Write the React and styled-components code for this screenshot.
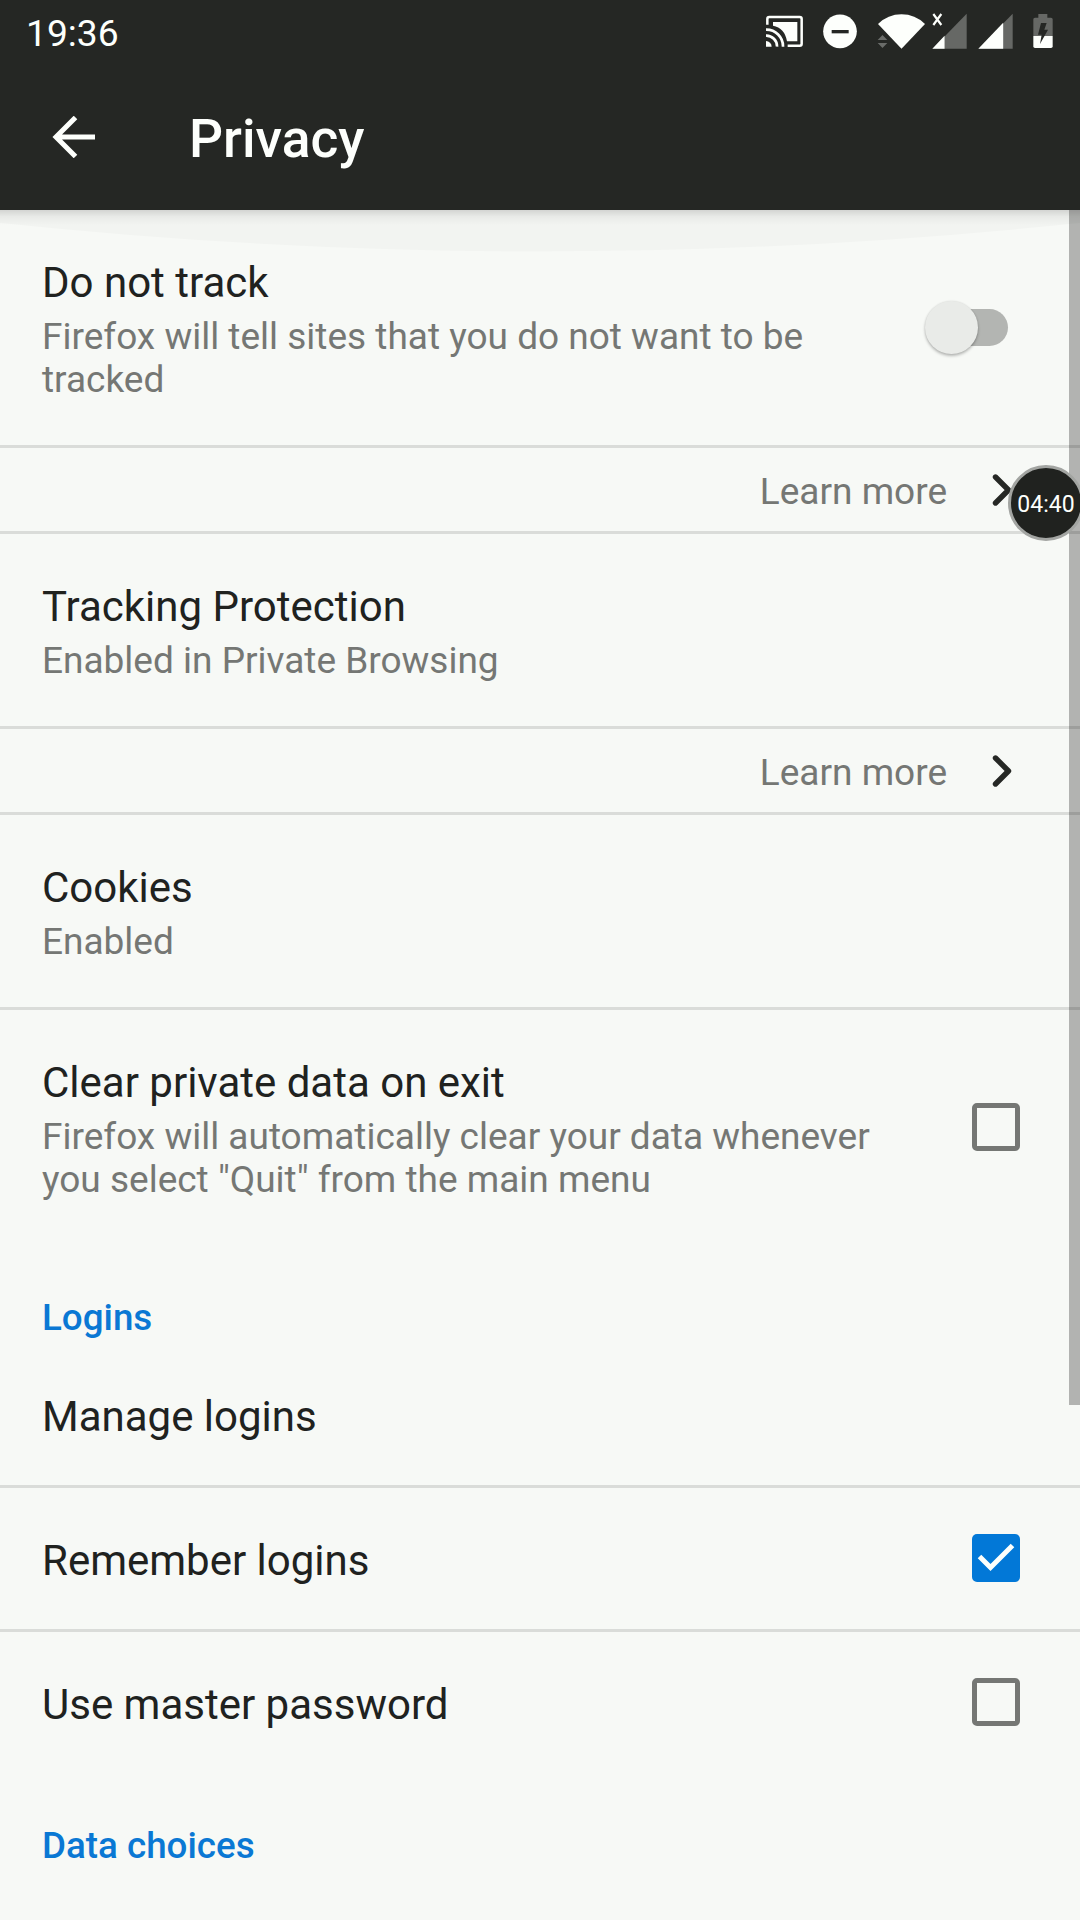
import React, { useState } from "react";
import styled, { createGlobalStyle } from "styled-components";

const INK = "#20221f";
const MUTED = "#757774";
const ACCENT = "#0a78d4";
const DARK = "#252724";
const PAPER = "#f7f9f6";

const GlobalStyle = createGlobalStyle`
  *, *::before, *::after { box-sizing: border-box; }
  body {
    margin: 0;
    background: ${PAPER};
    font-family: Roboto, "Noto Sans", sans-serif;
    overflow: hidden;
  }
`;

const Screen = styled.div`
  position: relative;
  display: flex;
  flex-direction: column;
  width: 1080px;
  height: 1920px;
  overflow: hidden;
  background: ${PAPER};
`;

const StatusBar = styled.header`
  display: flex;
  align-items: flex-start;
  justify-content: space-between;
  height: 63px;
  padding: 0 27px 0 26px;
  background: ${DARK};
  color: #fdfffc;
`;

const Clock = styled.span`
  padding-top: 11px;
  font-size: 37.2px;
  line-height: 44px;
`;

const StatusIcons = styled.div`
  display: flex;
  align-items: flex-start;
  padding-top: 13px;
`;

const StatusSvg = styled.svg`
  flex: none;
  display: block;
  height: 36px;
  width: ${(p) => p.$w}px;
  margin-left: ${(p) => p.$gap}px;
`;

const AppBar = styled.nav`
  display: flex;
  align-items: center;
  height: 147px;
  padding-left: 41px;
  background: ${DARK};
  color: #fdfffc;
`;

const BackButton = styled.button`
  display: flex;
  padding: 0;
  border: 0;
  background: none;
  color: inherit;
`;

const PageTitle = styled.h1`
  margin: 4px 0 0 82px;
  font-size: 53.4px;
  font-weight: 500;
  line-height: 62px;
`;

const Content = styled.main`
  position: relative;
  flex: 1;
  overflow: hidden;
`;

const TopShadow = styled.div`
  position: absolute;
  inset: 0 0 auto 0;
  height: 15px;
  background: linear-gradient(rgba(0, 0, 0, 0.13), rgba(0, 0, 0, 0.04) 45%, transparent);
  pointer-events: none;
`;

const EdgeGlow = styled.svg`
  position: absolute;
  top: 0;
  left: 0;
  pointer-events: none;
`;

const ScrollThumb = styled.div`
  position: absolute;
  top: 0;
  right: 0;
  width: 11px;
  height: 1195px;
  background: rgba(0, 0, 0, 0.28);
`;

const Row = styled.div`
  display: flex;
  align-items: center;
  justify-content: space-between;
  min-height: ${(p) => p.$height}px;
  padding: 0 60px 0 42px;
  border-bottom: ${(p) => (p.$last ? "0" : "3px solid #dadcd9")};
`;

const Texts = styled.div`
  width: 840px;
  padding-top: 4px;
`;

const Label = styled.div`
  color: ${INK};
  font-size: 42px;
  line-height: 50px;
`;

const Summary = styled.div`
  color: ${MUTED};
  font-size: 37px;
  line-height: 43px;
  padding-top: 7px;
`;

const LearnRow = styled.a`
  display: flex;
  align-items: center;
  justify-content: flex-end;
  gap: 45px;
  height: 86px;
  padding-right: 67px;
  border-bottom: 3px solid #dadcd9;
  color: ${MUTED};
  font-size: 37px;
  line-height: 43px;
`;

const LearnText = styled.span`
  padding-top: 3px;
`;

const SectionTitle = styled.h2`
  margin: 0;
  height: 99px;
  padding: 51px 42px 0;
  color: ${ACCENT};
  font-size: 36.75px;
  font-weight: 500;
  line-height: 43px;
`;

const Check = styled.button`
  display: flex;
  flex: none;
  width: 48px;
  height: 48px;
  margin: 0 0 1px;
  padding: 0;
  border: ${(p) => (p.$on ? "0" : `5px solid ${MUTED}`)};
  border-radius: 5px;
  background: ${(p) => (p.$on ? "#0278d7" : "transparent")};
`;

const SwitchTrack = styled.button`
  display: flex;
  align-items: center;
  flex: none;
  width: 72px;
  height: 37px;
  margin-right: 12px;
  padding: 0;
  border: 0;
  border-radius: 19px;
  background: ${(p) => (p.$on ? "#7fbbea" : "#b3b5b2")};
`;

const SwitchThumb = styled.span`
  flex: none;
  width: 53px;
  height: 53px;
  margin-left: ${(p) => (p.$on ? 31 : -11)}px;
  border-radius: 50%;
  background: #e9ebe8;
  box-shadow: 0 2px 3px rgba(0, 0, 0, 0.26), 0 0 2px rgba(0, 0, 0, 0.1);
`;

const RecorderBubble = styled.div`
  position: absolute;
  top: 465px;
  left: 1008px;
  display: flex;
  align-items: center;
  justify-content: center;
  width: 76px;
  height: 76px;
  padding-top: 3px;
  border: 3px solid #a3a5a2;
  border-radius: 50%;
  background: #20221f;
  color: #fdfffc;
  font-size: 23px;
  line-height: 27px;
`;

function CastIcon() {
  return (
    <StatusSvg $w={37} $gap={0} viewBox="78 39 111 108">
      <path
        d="M82 74 V57 Q82 51 88 51 H179 Q185 51 185 57 V131 Q185 137 179 137 H143"
        fill="none" stroke="#fdfffc" strokeWidth="7.5"
      />
      <path d="M99 66 H172 V124 H141 Q134 83 99 77 Z" fill="#fdfffc" />
      <g fill="none" stroke="#fdfffc" strokeWidth="8">
        <path d="M78 89 A50 50 0 0 1 129 140" />
        <path d="M78 107 A32 32 0 0 1 111 140" />
      </g>
      <path d="M78 123 A17 17 0 0 1 95 140 H78 Z" fill="#fdfffc" />
    </StatusSvg>
  );
}

function DndIcon() {
  return (
    <StatusSvg $w={34} $gap={20} viewBox="250 39 102 108">
      <circle cx="301" cy="94" r="50.5" fill="#fdfffc" />
      <rect x="276" y="90" width="51" height="10" fill={DARK} />
    </StatusSvg>
  );
}

function WifiIcon() {
  return (
    <StatusSvg $w={48} $gap={20} viewBox="411 39 144 108">
      <path d="M414 72 Q444 43 484.500 43 Q525 43 555 72 L484.500 146 Z" fill="#fdfffc" />
      <path d="M413 120 L427.500 105 L442 120 Z M413 129 H442 L427.500 144 Z" fill="#6a6c69" />
    </StatusSvg>
  );
}

function SignalIcon({ gap, level, missing }) {
  const split = 102 * level;
  return (
    <StatusSvg $w={36} $gap={gap} viewBox="0 39 108 108">
      <path d="M2 146 L104 41 V146 Z" fill="#666865" />
      <path d={`M1 146 L${split} ${146 - split * 1.03} V146 Z`} fill="#fdfffc" />
      {missing && (
        <path d="M4 42 L28 75 M28 42 L4 75" fill="none" stroke="#fdfffc" strokeWidth="6.5" />
      )}
    </StatusSvg>
  );
}

function BatteryIcon() {
  return (
    <StatusSvg $w={20} $gap={19} viewBox="878 39 60 108">
      <path
        d="M894 42 H921 V53 H932 Q937 53 937 58 V108 H879 V58 Q879 53 884 53 H894 Z"
        fill="#666865"
      />
      <path d="M879 108 H937 V139 Q937 144 932 144 H884 Q879 144 879 139 Z" fill="#fdfffc" />
      <path d="M902 69 H919 L912 89 H923 L899 132 L904 104 H893 Z" fill={DARK} />
    </StatusSvg>
  );
}

function BackArrow() {
  return (
    <svg width="66" height="42" viewBox="0 0 66 42">
      <path d="M54 21 H15 M34.500 1.500 L15 21 L34.500 40.500" fill="none" stroke="#fdfffc" strokeWidth="5" />
    </svg>
  );
}

function Chevron() {
  return (
    <svg width="21" height="32" viewBox="0 0 21 32">
      <path
        d="M3.500 3 L16.500 16 L3.500 29"
        fill="none" stroke="#262825" strokeWidth="5.400" strokeLinecap="round" strokeLinejoin="round"
      />
    </svg>
  );
}

function Checkbox({ initial = false }) {
  const [on, setOn] = useState(initial);
  return (
    <Check $on={on} role="checkbox" aria-checked={on} onClick={() => setOn(!on)}>
      {on && (
        <svg width="48" height="48" viewBox="0 0 48 48">
          <path d="M7.500 22.500 L18.500 33.500 L40.500 11.500" fill="none" stroke="#fdfffc" strokeWidth="5" />
        </svg>
      )}
    </Check>
  );
}

function Switch() {
  const [on, setOn] = useState(false);
  return (
    <SwitchTrack $on={on} role="switch" aria-checked={on} onClick={() => setOn(!on)}>
      <SwitchThumb $on={on} />
    </SwitchTrack>
  );
}

function Preference({ label, summary, height, last, children }) {
  return (
    <Row $height={height} $last={last}>
      <Texts>
        <Label>{label}</Label>
        {summary && <Summary>{summary}</Summary>}
      </Texts>
      {children}
    </Row>
  );
}

function LearnMore() {
  return (
    <LearnRow>
      <LearnText>Learn more</LearnText>
      <Chevron />
    </LearnRow>
  );
}

export default function App() {
  return (
    <Screen>
      <GlobalStyle />
      <StatusBar>
        <Clock>19:36</Clock>
        <StatusIcons>
          <CastIcon />
          <DndIcon />
          <WifiIcon />
          <SignalIcon gap={7} level={0.37} missing />
          <SignalIcon gap={10} level={0.74} />
          <BatteryIcon />
        </StatusIcons>
      </StatusBar>
      <AppBar>
        <BackButton aria-label="Back">
          <BackArrow />
        </BackButton>
        <PageTitle>Privacy</PageTitle>
      </AppBar>
      <Content>
        <Preference
          height={238}
          label="Do not track"
          summary={<>Firefox will tell sites that you do not want to be<br />tracked</>}
        >
          <Switch />
        </Preference>
        <LearnMore />
        <Preference height={195} label="Tracking Protection" summary="Enabled in Private Browsing" />
        <LearnMore />
        <Preference height={195} label="Cookies" summary="Enabled" />
        <Preference
          height={235}
          last
          label="Clear private data on exit"
          summary={<>Firefox will automatically clear your data whenever<br />you select "Quit" from the main menu</>}
        >
          <Checkbox />
        </Preference>
        <SectionTitle>Logins</SectionTitle>
        <Preference height={144} label="Manage logins" />
        <Preference height={144} label="Remember logins">
          <Checkbox initial />
        </Preference>
        <Preference height={141} last label="Use master password">
          <Checkbox />
        </Preference>
        <SectionTitle>Data choices</SectionTitle>
        <EdgeGlow width="1080" height="42" viewBox="0 0 1080 42">
          <path d="M0 0 H1080 V13 Q540 70 0 13 Z" fill="rgba(0, 0, 0, 0.018)" />
        </EdgeGlow>
        <TopShadow />
        <ScrollThumb />
      </Content>
      <RecorderBubble>04:40</RecorderBubble>
    </Screen>
  );
}
